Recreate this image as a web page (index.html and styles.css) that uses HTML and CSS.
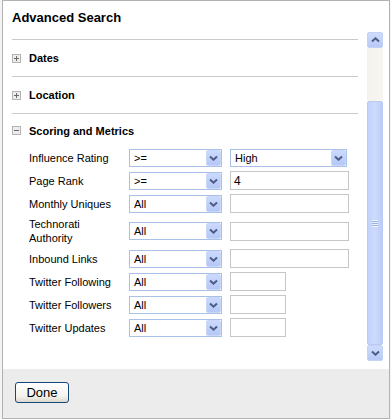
FILE: index.html
```html
<!DOCTYPE html>
<html lang="en">
<head>
    <meta charset="UTF-8">
    <meta name="viewport" content="width=device-width, initial-scale=1.0">
    <title>Advanced Search</title>
    <link rel="stylesheet" href="styles.css">
</head>
<body>
    <div class="dialog">
        <div class="dialog-title">Advanced Search</div>
        <div class="dialog-body">
            <div class="scroll-content">
                <div class="section">
                    <div class="section-head">
                        <svg class="toggle" width="9" height="9" viewBox="0 0 9 9"><rect x="0.5" y="0.5" width="8" height="8" fill="#ececec" stroke="#b4b4b4"/><path d="M2 4.5h5M4.5 2v5" stroke="#6a6a6a"/></svg>
                        Dates
                    </div>
                </div>
                <div class="section">
                    <div class="section-head">
                        <svg class="toggle" width="9" height="9" viewBox="0 0 9 9"><rect x="0.5" y="0.5" width="8" height="8" fill="#ececec" stroke="#b4b4b4"/><path d="M2 4.5h5M4.5 2v5" stroke="#6a6a6a"/></svg>
                        Location
                    </div>
                </div>
                <div class="section">
                    <div class="section-head open">
                        <svg class="toggle" width="9" height="9" viewBox="0 0 9 9"><rect x="0.5" y="0.5" width="8" height="8" fill="#ececec" stroke="#b4b4b4"/><path d="M2 4.5h5" stroke="#6a6a6a"/></svg>
                        Scoring and Metrics
                    </div>
                    <div class="fields">
                        <div class="field-label">Influence Rating</div>
                        <div class="select"><span>&gt;=</span><span class="drop"><svg width="9" height="6" viewBox="0 0 9 6"><path d="M1 1.5l3.5 3.2 3.5-3.2" fill="none" stroke="#4b5d84" stroke-width="2"/></svg></span></div>
                        <div class="select wide"><span>High</span><span class="drop"><svg width="9" height="6" viewBox="0 0 9 6"><path d="M1 1.5l3.5 3.2 3.5-3.2" fill="none" stroke="#4b5d84" stroke-width="2"/></svg></span></div>

                        <div class="field-label">Page Rank</div>
                        <div class="select"><span>&gt;=</span><span class="drop"><svg width="9" height="6" viewBox="0 0 9 6"><path d="M1 1.5l3.5 3.2 3.5-3.2" fill="none" stroke="#4b5d84" stroke-width="2"/></svg></span></div>
                        <input class="text" type="text" value="4">

                        <div class="field-label">Monthly Uniques</div>
                        <div class="select"><span>All</span><span class="drop"><svg width="9" height="6" viewBox="0 0 9 6"><path d="M1 1.5l3.5 3.2 3.5-3.2" fill="none" stroke="#4b5d84" stroke-width="2"/></svg></span></div>
                        <input class="text" type="text">

                        <div class="field-label">Technorati<br>Authority</div>
                        <div class="select"><span>All</span><span class="drop"><svg width="9" height="6" viewBox="0 0 9 6"><path d="M1 1.5l3.5 3.2 3.5-3.2" fill="none" stroke="#4b5d84" stroke-width="2"/></svg></span></div>
                        <input class="text" type="text">

                        <div class="field-label">Inbound Links</div>
                        <div class="select"><span>All</span><span class="drop"><svg width="9" height="6" viewBox="0 0 9 6"><path d="M1 1.5l3.5 3.2 3.5-3.2" fill="none" stroke="#4b5d84" stroke-width="2"/></svg></span></div>
                        <input class="text" type="text">

                        <div class="field-label">Twitter Following</div>
                        <div class="select"><span>All</span><span class="drop"><svg width="9" height="6" viewBox="0 0 9 6"><path d="M1 1.5l3.5 3.2 3.5-3.2" fill="none" stroke="#4b5d84" stroke-width="2"/></svg></span></div>
                        <input class="text short" type="text">

                        <div class="field-label">Twitter Followers</div>
                        <div class="select"><span>All</span><span class="drop"><svg width="9" height="6" viewBox="0 0 9 6"><path d="M1 1.5l3.5 3.2 3.5-3.2" fill="none" stroke="#4b5d84" stroke-width="2"/></svg></span></div>
                        <input class="text short" type="text">

                        <div class="field-label">Twitter Updates</div>
                        <div class="select"><span>All</span><span class="drop"><svg width="9" height="6" viewBox="0 0 9 6"><path d="M1 1.5l3.5 3.2 3.5-3.2" fill="none" stroke="#4b5d84" stroke-width="2"/></svg></span></div>
                        <input class="text short" type="text">
                    </div>
                </div>
            </div>
            <div class="scrollbar">
                <div class="sb-btn"><svg width="9" height="6" viewBox="0 0 9 6"><path d="M1 4.5l3.5-3.2 3.5 3.2" fill="none" stroke="#4b5d84" stroke-width="2"/></svg></div>
                <div class="sb-track"></div>
                <div class="sb-thumb"><span class="grip"></span></div>
                <div class="sb-btn"><svg width="9" height="6" viewBox="0 0 9 6"><path d="M1 1.5l3.5 3.2 3.5-3.2" fill="none" stroke="#4b5d84" stroke-width="2"/></svg></div>
            </div>
        </div>
        <div class="dialog-footer">
            <button class="btn" type="button">Done</button>
        </div>
    </div>
</body>
</html>
```

FILE: styles.css
```css
html { background: #f4f4f4; }
body { margin: 0; padding-left: 2px; font-family: "Liberation Sans", Arial, sans-serif; color: #000; }

.dialog {
    width: 386px; height: 417px;
    background: white; border: 1px solid #b2b2b2;
    display: flex; flex-direction: column;
}
.dialog-title {
    height: 31px; padding: 9px 0 0 9px; box-sizing: border-box;
    font-size: 13px; font-weight: bold; line-height: 16px;
}

.dialog-body { height: 337px; display: flex; padding-right: 6px; }
.scroll-content { flex: 1; padding: 7px 9px 0 9px; }

.section { border-top: 1px solid #cacaca; }
.section-head {
    height: 36px; display: flex; align-items: center; gap: 8px;
    font-size: 11px; font-weight: bold;
}
.section-head.open { height: 33px; }
.toggle { display: block; }

.fields {
    display: grid; grid-template-columns: 92px 93px auto;
    column-gap: 8px; row-gap: 4px; align-items: center;
    padding: 2px 0 0 17px; font-size: 11px;
}
.field-label { line-height: 14px; }

.select {
    width: 93px; height: 18px; box-sizing: border-box;
    border: 1px solid #a9c1e6; background: white;
    display: flex; align-items: center; justify-content: space-between;
    padding-left: 4px;
}
.select.wide { width: 117px; }
.drop {
    width: 15px; height: 16px; box-sizing: border-box;
    border: 1px solid #c9d7fb; border-radius: 2px;
    background: linear-gradient(#cbd9fc, #b4c7f6);
    display: flex; align-items: center; justify-content: center;
}
.drop svg, .sb-btn svg { display: block; }

.text {
    width: 119px; height: 19px; box-sizing: border-box; margin: 0;
    border: 1px solid #c6c6c6; padding: 0 3px;
    font-family: "Liberation Sans", Arial, sans-serif; font-size: 12px;
}
.text.short { width: 56px; }

.scrollbar {
    width: 16px; height: 329px;
    display: flex; flex-direction: column;
}
.sb-btn {
    height: 16px; box-sizing: border-box;
    border: 1px solid #c4d2f6; border-radius: 2px;
    background: linear-gradient(#cfdcfd, #b7c9f7);
    display: flex; align-items: center; justify-content: center;
}
.sb-track { height: 53px; background: linear-gradient(90deg, #f3f2ec, #f7f6f1); }
.sb-thumb {
    height: 244px; box-sizing: border-box;
    border: 1px solid #b9cbf4; border-radius: 2px;
    background: linear-gradient(90deg, #c2d2fb, #ccdafc 50%, #bccdf8);
    display: flex; align-items: center; justify-content: center;
}
.grip {
    width: 6px; height: 7px;
    background: repeating-linear-gradient(#eef3fe 0 1px, #9cb3e6 1px 2px);
}

.dialog-footer {
    flex: 1; background: #ececec;
    padding: 13px 0 0 12px;
}
.btn {
    width: 54px; height: 21px; padding: 0;
    border: 1px solid #15467c; border-radius: 3px;
    background: linear-gradient(#ffffff, #f3f2ec 70%, #dcd8cc);
    font-family: "Liberation Sans", Arial, sans-serif; font-size: 13px; color: #000;
}
```
